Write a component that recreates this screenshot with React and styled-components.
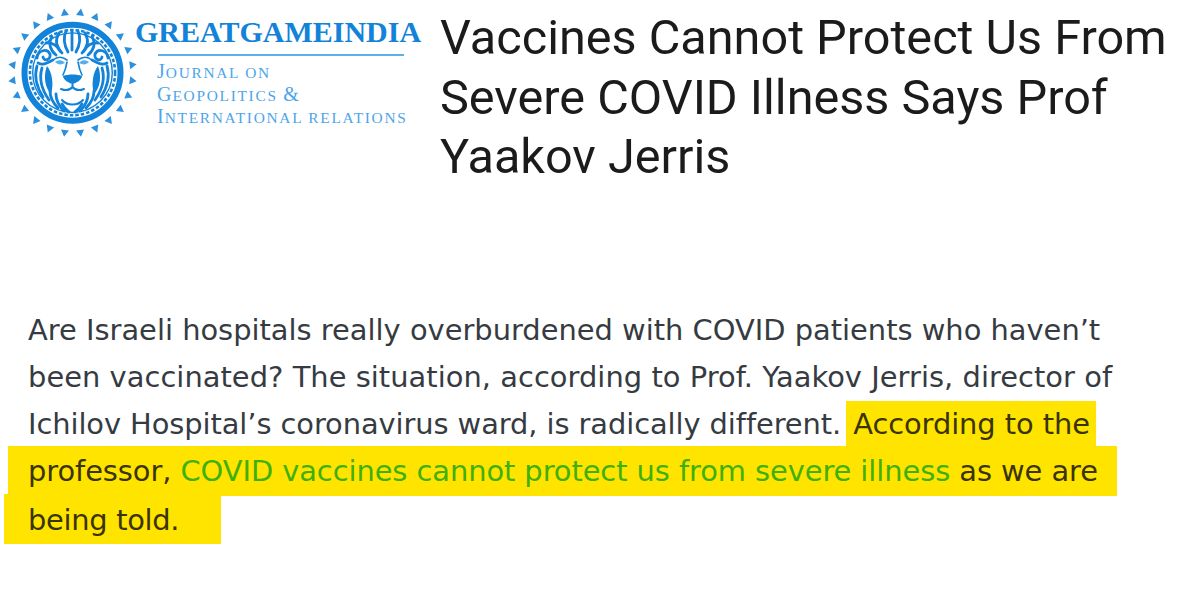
import React from "react";
import styled, { createGlobalStyle } from "styled-components";

const Global = createGlobalStyle`
  html, body { margin: 0; padding: 0; background: #fff; }
  body { width: 1181px; height: 616px; overflow: hidden; }
`;

const Page = styled.main`
  width: 1181px;
  height: 616px;
  display: flex;
  flex-direction: column;
  background: #fff;
`;

const Header = styled.header`
  display: flex;
  align-items: flex-start;
  height: 307px;
`;

const Brand = styled.div`
  display: flex;
  width: 440px;
  flex: none;
  padding: 8px 0 0 7px;
  box-sizing: border-box;
`;

const BrandCopy = styled.div`
  display: flex;
  flex-direction: column;
  margin-left: -8px;
  padding-top: 8px;
`;

const BrandName = styled.div`
  font: bold 30px/32px "Liberation Serif", serif;
  color: #1283d8;
  white-space: nowrap;
`;

const BrandRule = styled.div`
  height: 2px;
  width: 246px;
  margin: 6px 0 0 23px;
  background: #5cb0ec;
`;

const Tagline = styled.div`
  margin: 6px 0 0 22px;
  font: 15.4px/22.5px "Liberation Serif", serif;
  letter-spacing: 1.72px;
  text-transform: uppercase;
  color: #4da5e8;
  white-space: nowrap;
`;

const Cap = styled.span`
  font-size: 20px;
  line-height: 0;
  letter-spacing: 1px;
`;

const Title = styled.h1`
  margin: 8px 0 0;
  width: 735px;
  font: 400 48.6px/59.5px Roboto, sans-serif;
  color: #1b1b1b;
`;

const Body = styled.div`
  font: 28.9px/47.5px "DejaVu Sans", sans-serif;
  color: #363b42;
`;

const Line = styled.div`
  display: flex;
  height: ${(p) => p.$h || 47}px;
  white-space: pre;
  padding-left: ${(p) => p.$indent ?? 28}px;
  letter-spacing: ${(p) => p.$track || 0}px;
`;

const Mark = styled.span`
  display: block;
  background: #ffe400;
  color: #3a3500;
  line-height: ${(p) => p.$h}px;
  height: ${(p) => p.$h}px;
  width: ${(p) => p.$w}px;
  margin-left: ${(p) => p.$shift || 0}px;
  padding: ${(p) => p.$drop || 0}px 0 0 ${(p) => p.$pad}px;
  box-sizing: border-box;
  flex: none;
`;

const Green = styled.span`
  color: #3fb00c;
`;

const BLUE = "#1283d8";

function LionLogo() {
  const spikes = Array.from({ length: 24 }, (_, i) => 7.5 + i * 15);
  const mane = [
    "M72 31 L72 50", "M66 31 C63 38 64 45 68 52", "M78 31 C81 38 80 45 76 52",
    "M59 33 C55 40 56 47 62 53", "M85 33 C89 40 88 47 82 53",
    "M52 37 C48 43 50 50 56 55", "M92 37 C96 43 94 50 88 55",
    "M46 43 C52 42 58 46 60 51", "M98 43 C92 42 86 46 84 51",
    "M37 66 C34 76 36 86 43 97", "M107 66 C110 76 108 86 101 97",
    "M42 68 C39 78 42 90 49 100", "M102 68 C105 78 102 90 95 100",
    "M50 91 C50 97 53 103 58 108", "M94 91 C94 97 91 103 86 108",
    "M56 94 C56 100 59 106 64 111", "M88 94 C88 100 85 106 80 111",
    "M62 104 C64 108 66 110 69 112", "M82 104 C80 108 78 110 75 112",
  ];
  return (
    <svg width="136" height="132" viewBox="7 8 136 132" aria-label="GreatGameIndia lion logo">
      <g fill="#2b90de">
        {spikes.map((a) => (
          <polygon key={a} points="72.5,8 68.5,15 76.5,15" transform={`rotate(${a} 72.5 72.7)`} />
        ))}
      </g>
      <circle cx="72.5" cy="72.7" r="48" fill="#fff" stroke={BLUE} strokeWidth="6" />
      <circle cx="72.5" cy="72.7" r="42.6" fill="none" stroke={BLUE} strokeWidth="2.6" strokeDasharray="3.5 2" />
      <circle cx="72.5" cy="72.7" r="39.8" fill="none" stroke={BLUE} strokeWidth="1.4" />
      <g fill="none" stroke={BLUE} strokeWidth="2.8" strokeLinecap="round">
        {mane.map((d) => <path key={d} d={d} />)}
        <path d="M37 58 C38 50 47 48 50 54 C51 60 44 62 43 57" />
        <path d="M108 58 C107 50 98 48 95 54 C94 60 101 62 102 57" />
        <path d="M38 63 C44 66 48 62 53 60" />
        <path d="M107 63 C101 66 97 62 92 60" />
      </g>
      <path d="M47 66 C52 72 54 84 51 94 C45 88 43 76 47 66Z" fill={BLUE} />
      <path d="M98 66 C93 72 91 84 94 94 C100 88 102 76 98 66Z" fill={BLUE} />
      <g fill="#5aaee8">
        <path d="M55 62 C59 59 63 60 65 63 C61 65 58 65 55 62Z" />
        <path d="M89 62 C85 59 81 60 79 63 C83 65 86 65 89 62Z" />
      </g>
      <g fill="none" stroke={BLUE} strokeWidth="1.6" strokeLinecap="round">
        <path d="M53 60 C58 56 63 57 67 60" />
        <path d="M92 60 C87 56 82 57 78 60" />
        <path d="M67 62 C66 68 65 71 63 75" />
        <path d="M78 62 C79 68 80 71 82 75" />
      </g>
      <path d="M63 76 C68 74 77 74 82 76 C82 80 76 83 72.5 84 C69 83 63 80 63 76Z" fill={BLUE} />
      <g fill="none" stroke={BLUE} strokeWidth="2" strokeLinecap="round">
        <path d="M72.5 84 L72.5 87 M61 89 C66 91 70 90 72.5 87 C75 90 79 91 84 89" />
        <path d="M62 100 C67 106 78 106 83 100" />
      </g>
    </svg>
  );
}

export default function App() {
  return (
    <Page>
      <Global />
      <Header>
        <Brand>
          <LionLogo />
          <BrandCopy>
            <BrandName>GREATGAMEINDIA</BrandName>
            <BrandRule />
            <Tagline>
              <Cap>J</Cap>ournal on
              <br />
              <Cap>G</Cap>eopolitics <Cap>&amp;</Cap>
              <br />
              <Cap>I</Cap>nternational relations
            </Tagline>
          </BrandCopy>
        </Brand>
        <Title>Vaccines Cannot Protect Us From Severe COVID Illness Says Prof Yaakov Jerris</Title>
      </Header>
      <Body>
        <Line>Are Israeli hospitals really overburdened with COVID patients who haven’t</Line>
        <Line $track={0.04}>been vaccinated? The situation, according to Prof. Yaakov Jerris, director of</Line>
        <Line $h={45} $track={-0.08}>
          Ichilov Hospital’s coronavirus ward, is radically different.{" "}
          <Mark $w={250} $h={45} $pad={7} $shift={-4} $drop={1}>According to the</Mark>
        </Line>
        <Line $indent={8} $h={48} $track={-0.07}>
          <Mark $w={1109} $h={50} $pad={20}>
            professor, <Green>COVID vaccines cannot protect us from severe illness</Green> as we are
          </Mark>
        </Line>
        <Line $indent={4} $h={50} $track={-0.3}>
          <Mark $w={217} $h={50} $pad={24} $drop={1}>being told.</Mark>
        </Line>
      </Body>
    </Page>
  );
}
